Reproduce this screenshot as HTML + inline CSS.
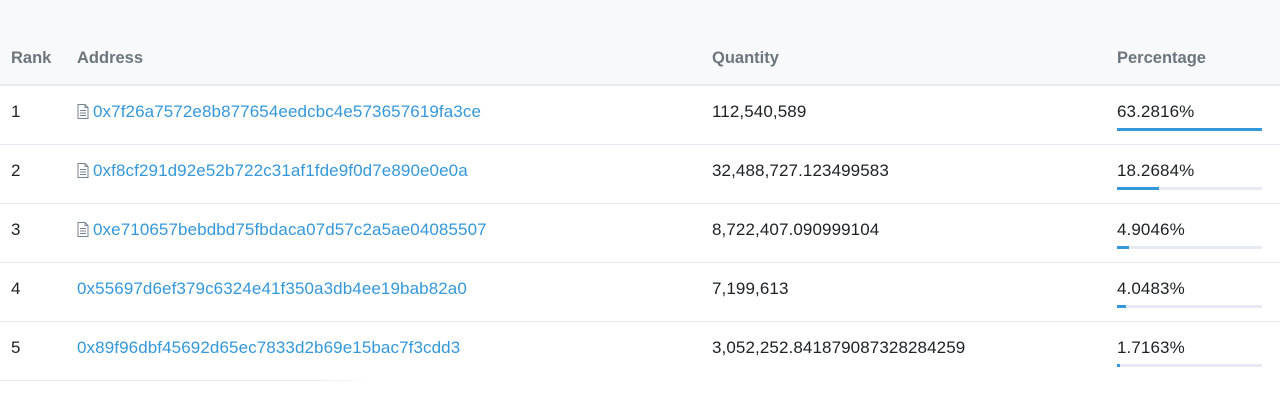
<!DOCTYPE html>
<html><head><style>
body{margin:0;width:1280px;height:400px;background:#fff;font-family:"Liberation Sans",Arial,sans-serif;font-size:17px;letter-spacing:0.1px;color:#1e2022;position:relative;overflow:hidden}
.hdr{position:absolute;left:0;top:0;width:1280px;height:84px;background:#f8f9fb;border-bottom:2px solid #e7eaf3}
.h{position:absolute;top:49px;font-weight:bold;color:#6c757d;font-size:16.5px;letter-spacing:0}
.row{position:absolute;left:0;width:1280px;height:59px}
.line{position:absolute;left:0;height:1px;background:#e7eaf3;width:1280px}
.c{position:absolute;top:0;line-height:1}
a{color:#3498db;text-decoration:none}
.ic{display:inline-block;vertical-align:-2px;margin-right:4px}
.bar{position:absolute;left:1117px;width:145px;height:3px;background:#e7eaf3}
.bar i{display:block;height:3px;background:#3498db}
</style></head><body>
<div class="hdr"></div>
<div class="h" style="left:11px">Rank</div>
<div class="h" style="left:77px">Address</div>
<div class="h" style="left:712px">Quantity</div>
<div class="h" style="left:1117px">Percentage</div>

<div class="row" style="top:86px">
<div class="c" style="left:11px;top:17px">1</div>
<div class="c" style="left:77px;top:17px"><svg class="ic" width="12" height="15" viewBox="0 0 12 15"><path d="M1 .5h7l3 3v11H1z M8 .5v3h3 M3 6.5h6M3 9h6M3 11.5h6" fill="none" stroke="#77838f" stroke-width="1"/></svg><a>0x7f26a7572e8b877654eedcbc4e573657619fa3ce</a></div>
<div class="c" style="left:712px;top:17px">112,540,589</div>
<div class="c" style="left:1117px;top:17px">63.2816%</div>
<div class="bar" style="top:42px"><i style="width:100%"></i></div>
</div>
<div class="line" style="top:144px"></div>

<div class="row" style="top:145px">
<div class="c" style="left:11px;top:17px">2</div>
<div class="c" style="left:77px;top:17px"><svg class="ic" width="12" height="15" viewBox="0 0 12 15"><path d="M1 .5h7l3 3v11H1z M8 .5v3h3 M3 6.5h6M3 9h6M3 11.5h6" fill="none" stroke="#77838f" stroke-width="1"/></svg><a>0xf8cf291d92e52b722c31af1fde9f0d7e890e0e0a</a></div>
<div class="c" style="left:712px;top:17px">32,488,727.123499583</div>
<div class="c" style="left:1117px;top:17px">18.2684%</div>
<div class="bar" style="top:42px"><i style="width:29%"></i></div>
</div>
<div class="line" style="top:203px"></div>

<div class="row" style="top:204px">
<div class="c" style="left:11px;top:17px">3</div>
<div class="c" style="left:77px;top:17px"><svg class="ic" width="12" height="15" viewBox="0 0 12 15"><path d="M1 .5h7l3 3v11H1z M8 .5v3h3 M3 6.5h6M3 9h6M3 11.5h6" fill="none" stroke="#77838f" stroke-width="1"/></svg><a>0xe710657bebdbd75fbdaca07d57c2a5ae04085507</a></div>
<div class="c" style="left:712px;top:17px">8,722,407.090999104</div>
<div class="c" style="left:1117px;top:17px">4.9046%</div>
<div class="bar" style="top:42px"><i style="width:8%"></i></div>
</div>
<div class="line" style="top:262px"></div>

<div class="row" style="top:263px">
<div class="c" style="left:11px;top:17px">4</div>
<div class="c" style="left:77px;top:17px"><a>0x55697d6ef379c6324e41f350a3db4ee19bab82a0</a></div>
<div class="c" style="left:712px;top:17px">7,199,613</div>
<div class="c" style="left:1117px;top:17px">4.0483%</div>
<div class="bar" style="top:42px"><i style="width:6%"></i></div>
</div>
<div class="line" style="top:321px"></div>

<div class="row" style="top:322px">
<div class="c" style="left:11px;top:17px">5</div>
<div class="c" style="left:77px;top:17px"><a>0x89f96dbf45692d65ec7833d2b69e15bac7f3cdd3</a></div>
<div class="c" style="left:712px;top:17px">3,052,252.841879087328284259</div>
<div class="c" style="left:1117px;top:17px">1.7163%</div>
<div class="bar" style="top:42px"><i style="width:2%"></i></div>
</div>
<div class="line" style="top:380px;width:375px;background:linear-gradient(90deg,#e7eaf3 85%,#fff)"></div>
</body></html>
